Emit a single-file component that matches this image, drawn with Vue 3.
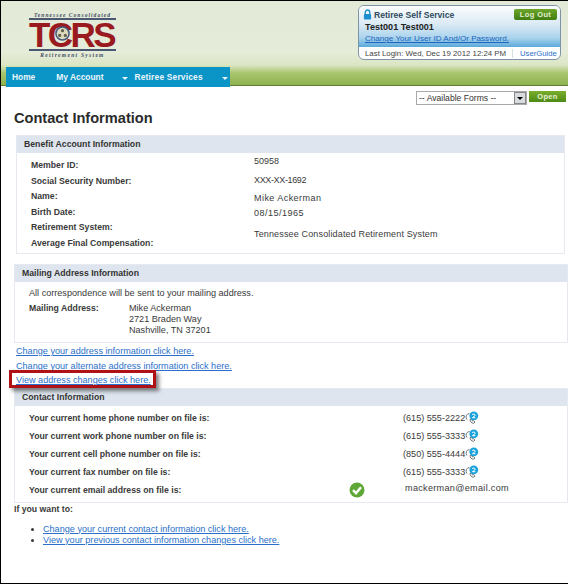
<template>
  <div class="page">
    <header class="header">
      <div class="header-top">
        <div class="logo">
          <div class="logo-top">Tennessee Consolidated</div>
          <div class="logo-mark">
            TCRS
            <svg class="seal" viewBox="0 0 16 16" width="15" height="15" aria-hidden="true">
              <circle cx="8" cy="8" r="7" fill="#dcd9bd" stroke="#41597c" stroke-width="1.6" />
              <circle cx="8" cy="5" r="1.7" fill="#5f5f4c" />
              <circle cx="5" cy="10" r="1.7" fill="#5f5f4c" />
              <circle cx="11" cy="10" r="1.7" fill="#5f5f4c" />
            </svg>
          </div>
          <div class="logo-bottom">Retirement System</div>
        </div>
        <div class="account">
          <div class="account-main">
            <div class="account-title">
              <svg viewBox="0 0 10 12" width="9" height="11" aria-hidden="true">
                <path d="M2.5 6V3.5a2.5 2.5 0 0 1 5 0V6" fill="none" stroke="#1c8fd0" stroke-width="1.5" />
                <rect x="1" y="5.5" width="8" height="6" rx="1" fill="#1c8fd0" />
              </svg>
              <span>Retiree Self Service</span>
              <button class="logout">Log Out</button>
            </div>
            <div class="account-user">Test001 Test001</div>
            <a class="account-link">Change Your User ID And/Or Password.</a>
          </div>
          <div class="account-foot">
            <span class="last-login">Last Login: Wed, Dec 19 2012 12:24 PM</span>
            <a class="guide">UserGuide</a>
          </div>
        </div>
      </div>
      <nav class="nav">
        <a class="nav-home">Home</a>
        <a class="nav-account">My Account</a>
        <i class="caret"></i>
        <a class="nav-services">Retiree Services</a>
        <i class="caret"></i>
      </nav>
    </header>

    <main class="content">
      <div class="forms">
        <div class="select">
          <span>-- Available Forms --</span>
          <b class="select-arrow"><i></i></b>
        </div>
        <button class="open">Open</button>
      </div>

      <h1>Contact Information</h1>

      <section class="panel benefit">
        <h2>Benefit Account Information</h2>
        <div class="benefit-body">
          <div class="benefit-labels">
            <div v-for="l in benefitLabels" :key="l">{{ l }}</div>
          </div>
          <div class="benefit-values">
            <div
              v-for="v in benefitValues"
              :key="v.text"
              :style="{ height: v.h + 'px', letterSpacing: v.ls + 'px' }"
            >{{ v.text }}</div>
          </div>
        </div>
      </section>

      <section class="panel mailing">
        <h2>Mailing Address Information</h2>
        <p class="note">All correspondence will be sent to your mailing address.</p>
        <div class="address">
          <strong>Mailing Address:</strong>
          <div>Mike Ackerman<br />2721 Braden Way<br />Nashville, TN 37201</div>
        </div>
      </section>

      <div class="links">
        <a>Change your address information click here.</a>
        <a>Change your alternate address information click here.</a>
        <a class="flagged">View address changes click here.</a>
      </div>

      <section class="panel contact">
        <h2>Contact Information</h2>
        <div class="contact-row" v-for="r in phones" :key="r.label">
          <strong>{{ r.label }}</strong>
          <span class="phone">{{ r.value }}</span>
          <svg class="skype" viewBox="0 0 14 13" width="14" height="13" aria-hidden="true">
            <path d="M4.500 2.500a3.600 3.600 0 0 0-2.500 6" fill="none" stroke="#777" stroke-width="1" />
            <path d="M5 8.500c0 2 1.400 3.600 3.400 3.800l1.600-1.200-1.400-1.400-1 .3-1-1.700z" fill="#fff" stroke="#666" stroke-width="0.9" />
            <circle cx="8.800" cy="4.800" r="4.400" fill="#1ba3dc" />
            <path d="M7 3.800c.8-1.200 3.200-.9 3.200.4 0 1.100-2 1.200-2.700 2.500h2.900" fill="none" stroke="#fff" stroke-width="1" />
          </svg>
        </div>
        <div class="contact-row email">
          <strong>Your current email address on file is:</strong>
          <svg class="check" viewBox="0 0 16 16" width="16" height="16" aria-hidden="true">
            <circle cx="8" cy="8" r="7.500" fill="#5fa838" />
            <path d="M4 8.200l3 3 5-6" fill="none" stroke="#fff" stroke-width="2.400" />
          </svg>
          <span>mackerman@email.com</span>
        </div>
      </section>

      <div class="want">If you want to:</div>
      <ul>
        <li><a>Change your current contact information click here.</a></li>
        <li><a>View your previous contact information changes click here.</a></li>
      </ul>
    </main>
  </div>
</template>

<script setup>
const benefitLabels = [
  'Member ID:',
  'Social Security Number:',
  'Name:',
  'Birth Date:',
  'Retirement System:',
  'Average Final Compensation:'
]
const benefitValues = [
  { text: '50958', h: 19, ls: 0 },
  { text: 'XXX-XX-1692', h: 18, ls: -0.35 },
  { text: 'Mike Ackerman', h: 15, ls: 0.45 },
  { text: '08/15/1965', h: 21, ls: 0.5 },
  { text: 'Tennessee Consolidated Retirement System', h: 16, ls: 0.15 }
]
const phones = [
  { label: 'Your current home phone number on file is:', value: '(615) 555-2222' },
  { label: 'Your current work phone number on file is:', value: '(615) 555-3333' },
  { label: 'Your current cell phone number on file is:', value: '(850) 555-4444' },
  { label: 'Your current fax number on file is:', value: '(615) 555-3333' }
]
</script>

<style>
body {
  margin: 0;
  background: #fff;
}
</style>

<style scoped>
.page {
  width: 568px;
  height: 584px;
  box-sizing: border-box;
  border: 1px solid #000;
  border-right: 0;
  overflow: hidden;
  font-family: "Liberation Sans", Arial, sans-serif;
  font-size: 9.1px;
  color: #3a3a3a;
}
a {
  color: #2a6fc9;
  text-decoration: underline;
}
strong {
  font-size: 8.7px;
}

.header {
  height: 85px;
  box-sizing: border-box;
  border-bottom: 1px solid #5c7a3a;
  background: linear-gradient(#e2e9d6 0, #e6ecda 50px, #dbe6c4 64px, #a9c66e 72px, #8db04e 85px);
  display: flex;
  flex-direction: column;
  justify-content: space-between;
}
.header-top {
  display: flex;
  justify-content: space-between;
  align-items: flex-start;
  padding: 4px 7px 0 28px;
}
.logo {
  width: 87px;
  margin-top: 7px;
  color: #3d4a63;
}
.logo-top,
.logo-bottom {
  font-family: "Liberation Serif", serif;
  font-weight: bold;
  font-style: italic;
  font-size: 5.5px;
  letter-spacing: 1.05px;
  line-height: 6px;
  text-align: center;
  white-space: nowrap;
}
.logo-bottom {
  letter-spacing: 1.3px;
}
.logo-mark {
  position: relative;
  box-sizing: border-box;
  height: 33px;
  margin-bottom: 1px;
  border-top: 2px solid #4a5872;
  border-bottom: 2px solid #4a5872;
  font-size: 35px;
  font-weight: bold;
  line-height: 29px;
  letter-spacing: -2.6px;
  color: #9a1b1f;
  white-space: nowrap;
}
.seal {
  position: absolute;
  left: 26px;
  top: 6px;
}
.account {
  width: 203px;
  height: 55px;
  box-sizing: border-box;
  border: 1px solid #7f93a6;
  border-radius: 6px;
  overflow: hidden;
  background: #fff;
}
.account-main {
  height: 41px;
  box-sizing: border-box;
  padding: 3px 3px 0 6px;
  background: linear-gradient(#fbfdfe, #dbeaf5 18px, #a9d3ec 32px, #5aa9da 41px);
}
.account-title {
  display: flex;
  align-items: center;
  gap: 2px;
  height: 11px;
  font-size: 8.6px;
  font-weight: bold;
  color: #2f4a5e;
}
.account-title svg {
  margin-left: -2px;
}
.logout {
  margin-left: auto;
  width: 43px;
  height: 11px;
  padding: 0;
  border: 0;
  border-radius: 2px;
  background: linear-gradient(#6ea62a, #3f7d12);
  color: #e4efd0;
  font: bold 7.5px "Liberation Sans", Arial, sans-serif;
  letter-spacing: 0.4px;
}
.account-user {
  margin-top: 1px;
  font-size: 9.1px;
  line-height: 13px;
  font-weight: bold;
  color: #222;
}
.account-link {
  display: block;
  font-size: 8.1px;
  line-height: 10px;
  color: #1b65c0;
  white-space: nowrap;
}
.account-foot {
  display: flex;
  align-items: center;
  height: 12px;
  font-size: 7.85px;
  padding-left: 6px;
}
.last-login {
  width: 147px;
  color: #444;
  border-right: 1px solid #d5dde5;
  white-space: nowrap;
}
.guide {
  margin-left: 7px;
  color: #2a6fc9;
  font-size: 7.7px;
  text-decoration: none;
}

.nav {
  align-self: flex-start;
  margin: 0 0 -2px 5px;
  width: 224px;
  height: 20px;
  background: #0b94c6;
  display: flex;
  align-items: center;
  font-size: 8.4px;
  font-weight: bold;
  white-space: nowrap;
}
.nav a {
  color: #eaf6fb;
  text-decoration: none;
}
.nav-home {
  margin-left: 6px;
}
.nav-account {
  margin-left: 21px;
}
.caret {
  width: 0;
  height: 0;
  margin-top: 2px;
  border-left: 3px solid transparent;
  border-right: 3px solid transparent;
  border-top: 3px solid #eaf6fb;
}
.nav-account + .caret {
  margin-left: 19px;
}
.nav-services {
  margin-left: 6px;
  letter-spacing: 0.2px;
}
.nav-services + .caret {
  margin-left: 19px;
}

.forms {
  display: flex;
  justify-content: flex-end;
  align-items: flex-start;
  gap: 2px;
  padding: 5px 2px 0 0;
  height: 12px;
}
.select {
  width: 111px;
  height: 14px;
  box-sizing: border-box;
  border: 1px solid #a9a9a9;
  display: flex;
  align-items: center;
  justify-content: space-between;
  padding-left: 2px;
  font-size: 8.6px;
  color: #333;
}
.select-arrow {
  width: 12px;
  height: 12px;
  background: #d8dbe0;
  border: 1px solid #888;
  box-sizing: border-box;
  display: flex;
  align-items: center;
  justify-content: center;
}
.select-arrow i {
  width: 0;
  height: 0;
  border-left: 3px solid transparent;
  border-right: 3px solid transparent;
  border-top: 3px solid #000;
}
.open {
  width: 37px;
  height: 11px;
  padding: 0;
  border: 0;
  background: linear-gradient(#7aae2c, #4d8a16);
  color: #e9f2d8;
  font: bold 7.5px "Liberation Sans", Arial, sans-serif;
  letter-spacing: 0.3px;
}

h1 {
  margin: 5px 0 0 13px;
  font-size: 14.6px;
  line-height: 20px;
  color: #2b2b2b;
}
.panel {
  border: 1px solid #e6eaf0;
  box-sizing: border-box;
}
.panel h2 {
  margin: 0;
  height: 17px;
  padding-left: 7px;
  background: #dfe5ee;
  font-size: 8.7px;
  line-height: 17px;
  font-weight: bold;
  color: #333;
}
.benefit {
  margin: 7px 3px 0 15px;
  height: 119px;
}
.benefit-body {
  display: flex;
  font-size: 9px;
}
.benefit-labels {
  width: 223px;
  padding: 5px 0 0 14px;
  font-size: 8.7px;
  line-height: 15.6px;
  font-weight: bold;
}
.benefit-values {
  padding-top: 1px;
  line-height: 14px;
  white-space: nowrap;
}
.mailing {
  margin: 10px 0 0 13px;
  height: 79px;
}
.note {
  margin: 6px 0 0 14px;
  line-height: 11px;
}
.address {
  display: flex;
  margin: 4px 0 0 14px;
  line-height: 11px;
}
.address strong {
  width: 100px;
}
.links {
  display: flex;
  flex-direction: column;
  align-items: flex-start;
  gap: 3px;
  margin: 3px 0 0 15px;
  line-height: 11.5px;
}
.flagged {
  position: relative;
}
.flagged::after {
  content: "";
  position: absolute;
  left: -7px;
  right: -5px;
  top: -5px;
  bottom: -1.5px;
  border: 3px solid #b01116;
  box-shadow: 3px 3px 4px rgba(0, 0, 0, 0.5);
}
.contact {
  margin: 1px 0 0 13px;
  height: 115px;
}
.contact-row {
  display: flex;
  align-items: center;
  height: 18px;
  padding-left: 14px;
}
.contact-row:nth-of-type(1) {
  margin-top: 3px;
}
.contact-row strong {
  width: 374px;
}
.skype {
  margin-top: -1px;
}
.phone {
  white-space: nowrap;
}
.email {
  height: 19px;
}
.email strong {
  width: 320px;
}
.check {
  margin-right: 40px;
}
.email span {
  letter-spacing: 0.3px;
  margin-top: -4px;
}
.want {
  margin: 1px 0 0 13px;
  font-size: 8.7px;
  font-weight: bold;
  line-height: 11px;
}
ul {
  margin: 9px 0 0;
  padding: 0 0 0 42px;
  line-height: 11px;
}
</style>
